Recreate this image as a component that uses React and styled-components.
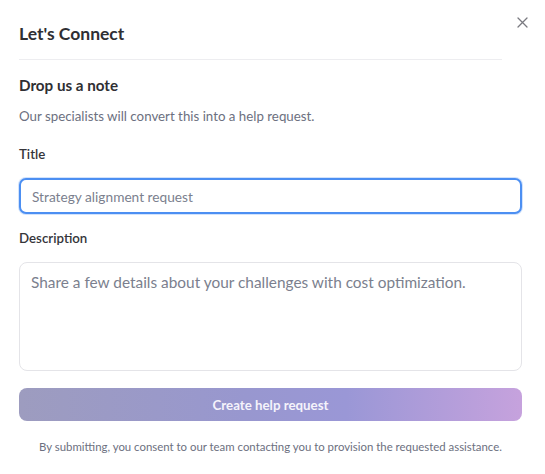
import React from 'react';
import styled, { createGlobalStyle } from 'styled-components';

const GlobalStyle = createGlobalStyle`
  html, body {
    margin: 0;
    padding: 0;
    background: #ffffff;
  }
  body {
    font-family: Lato, "Noto Sans", sans-serif;
    color: #2b2b30;
  }
`;

const Modal = styled.div`
  width: 545px;
  height: 474px;
  box-sizing: border-box;
  padding: 0 23px 0 19px;
  display: flex;
  flex-direction: column;
  background: #fff;
  position: relative;
`;

const Header = styled.div`
  display: flex;
  align-items: center;
  height: 51px;
  margin-right: 20px;
  border-bottom: 1px solid #ededf0;
  padding-top: 8px;
`;

const Title = styled.h2`
  margin: 0;
  font-size: 17.5px;
  font-weight: 700;
  color: #2f2f33;
`;

const CloseButton = styled.button`
  position: absolute;
  top: 14px;
  right: 15px;
  width: 16px;
  height: 16px;
  padding: 0;
  border: none;
  background: none;
  display: flex;
  align-items: center;
  justify-content: center;
  cursor: pointer;
`;

const Section = styled.div`
  display: flex;
  flex-direction: column;
  padding-top: 15px;
`;

const Heading = styled.h3`
  margin: 0;
  font-size: 15.2px;
  font-weight: 700;
  color: #2f2f33;
  line-height: 20px;
`;

const Subtitle = styled.p`
  margin: 12px 0 0;
  font-size: 13.3px;
  color: #6c7080;
  line-height: 18px;
`;

const Label = styled.label`
  display: block;
  font-size: 13.3px;
  font-weight: 600;
  color: #35353a;
  line-height: 18px;
  margin-top: ${(p) => p.$top}px;
`;

const Input = styled.input`
  box-sizing: border-box;
  width: 100%;
  height: 36px;
  margin-top: 15px;
  padding: 0 11px;
  border: 2px solid #4c8ff2;
  border-radius: 7px;
  box-shadow: 0 0 0 1px rgba(76, 143, 242, 0.25);
  font-family: inherit;
  font-size: 13.7px;
  color: #2b2b30;
  outline: none;
  &::placeholder {
    color: #7b7f8e;
  }
`;

const TextArea = styled.textarea`
  box-sizing: border-box;
  width: 100%;
  height: 109px;
  margin-top: 15px;
  padding: 9px 11px;
  border: 1px solid #e4e4e8;
  border-radius: 8px;
  font-family: inherit;
  font-size: 15.4px;
  line-height: 20px;
  resize: none;
  outline: none;
  &::placeholder {
    color: #7b7f8e;
  }
`;

const SubmitButton = styled.button`
  width: 100%;
  height: 33px;
  margin-top: 17px;
  border: none;
  border-radius: 8px;
  background: linear-gradient(90deg, #9d9cbf 0%, #9897cf 45%, #9a97d6 65%, #c6a2dd 100%);
  color: #f5f3fb;
  font-family: inherit;
  font-size: 13.3px;
  font-weight: 700;
  cursor: pointer;
`;

const Footnote = styled.p`
  margin: 18px 0 0;
  text-align: center;
  font-size: 11.4px;
  color: #6c7080;
  line-height: 16px;
`;

export default function App() {
  return (
    <>
      <GlobalStyle />
      <Modal>
        <Header>
          <Title>Let's Connect</Title>
        </Header>
        <CloseButton aria-label="Close">
          <svg width="11" height="11" viewBox="0 0 11 11">
            <path d="M1 1 L10 10 M10 1 L1 10" stroke="#7a7a80" strokeWidth="1.3" strokeLinecap="round" />
          </svg>
        </CloseButton>
        <Section>
          <Heading>Drop us a note</Heading>
          <Subtitle>Our specialists will convert this into a help request.</Subtitle>
          <Label $top={20}>Title</Label>
          <Input placeholder="Strategy alignment request" autoFocus />
          <Label $top={15}>Description</Label>
          <TextArea placeholder="Share a few details about your challenges with cost optimization." />
          <SubmitButton>Create help request</SubmitButton>
          <Footnote>
            By submitting, you consent to our team contacting you to provision the requested assistance.
          </Footnote>
        </Section>
      </Modal>
    </>
  );
}
